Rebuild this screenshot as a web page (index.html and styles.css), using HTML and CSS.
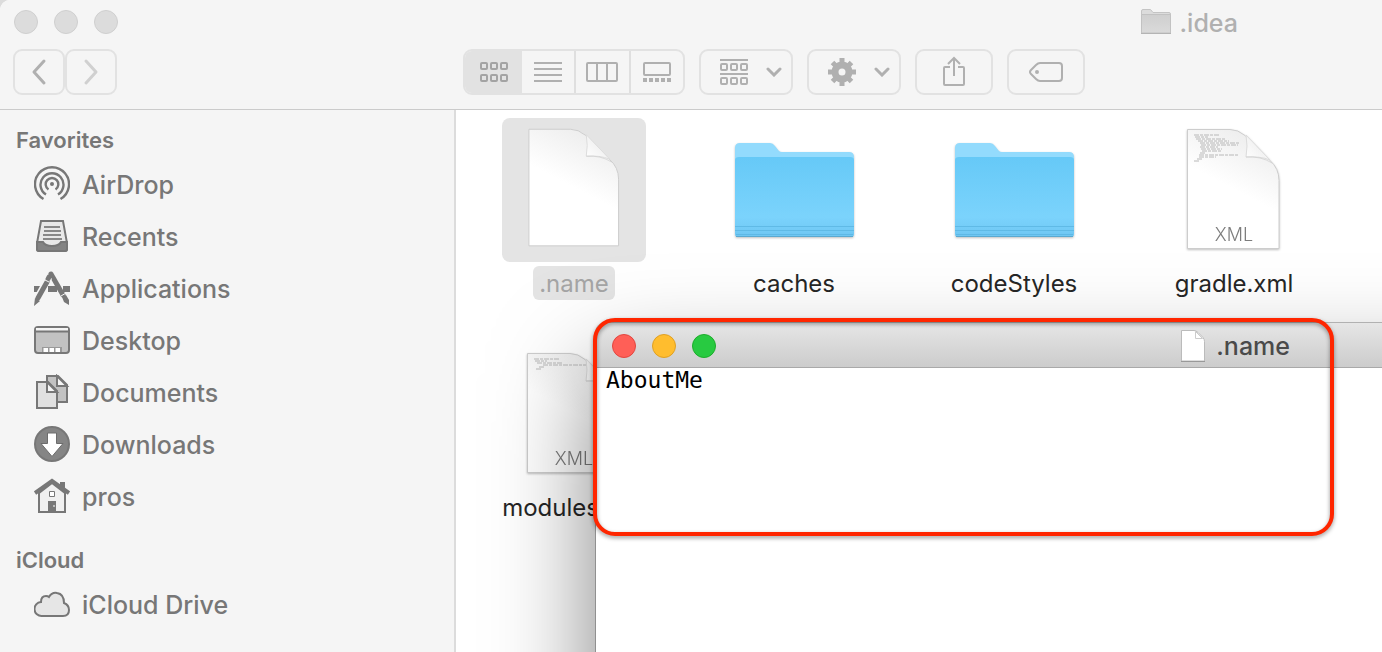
FILE: index.html
```html
<!DOCTYPE html>
<html lang="en">
<head>
  <meta charset="UTF-8">
  <title>.idea</title>
  <link rel="stylesheet" href="styles.css">
</head>
<body>
  <svg class="defs" width="0" height="0">
    <defs>
      <linearGradient id="folderFill" x1="0" y1="0" x2="0" y2="1">
        <stop offset="0" stop-color="#66c9f7"/>
        <stop offset="0.75" stop-color="#7bd3fc"/>
        <stop offset="1" stop-color="#6ec6f2"/>
      </linearGradient>
      <linearGradient id="paperFill" x1="0.7" y1="0" x2="0.5" y2="0.5">
        <stop offset="0" stop-color="#ececec"/>
        <stop offset="1" stop-color="#ffffff"/>
      </linearGradient>
      <linearGradient id="curlFill" x1="0" y1="1" x2="0.6" y2="0.4">
        <stop offset="0" stop-color="#ffffff"/>
        <stop offset="1" stop-color="#f0f0f0"/>
      </linearGradient>
      <linearGradient id="grayFolder" x1="0" y1="0" x2="0" y2="1">
        <stop offset="0" stop-color="#cfcfcf"/>
        <stop offset="1" stop-color="#dadada"/>
      </linearGradient>
    </defs>
    <symbol id="folder" viewBox="1 1 144 144">
      <path d="M14 116V31q0-5 5-5h30q3 0 5 3l4 5q1 1 3 1h67q5 0 5 5v76z" fill="#93dbfd"/>
      <path d="M14 117V43q0-3 4-3h111q4 0 4 3v74q0 3-3 3H17q-3 0-3-3z" fill="url(#folderFill)"/>
      <path d="M14 109.500h119M14 113.500h119M15 117.500h117" stroke="#58b2df" stroke-width="1" opacity="0.700"/>
      <path d="M15 119.500h117" stroke="#5aa9d0"/>
    </symbol>
    <symbol id="page" viewBox="1 0 144 144">
      <path d="M26.500 11.500H69q8 0 15 6l25 25q9 8 9 20v68h-91.500z" fill="url(#paperFill)" stroke="#cdcdcd"/>
      <path d="M85 17q2 11 0 22 14-1 24 3z" fill="url(#curlFill)" stroke="#dcdcdc"/>
      <path d="M85 39q15-1 26 6" fill="none" stroke="#cfcfcf" opacity="0.700"/>
    </symbol>
  </svg>

  <div class="finder">
    <header class="titlebar">
      <div class="title-row">
        <div class="lights inactive">
          <button class="light" aria-label="Close"></button>
          <button class="light" aria-label="Minimize"></button>
          <button class="light" aria-label="Zoom"></button>
        </div>
        <div class="finder-title">
          <svg width="30" height="26" viewBox="0 0 30 26">
            <path d="M.5 24V2Q.5.500 2 .5h7.500l2.500 3h16q1.500 0 1.500 1.500v19z" fill="#dcdcdc" stroke="#c4c4c4"/>
            <path d="M.5 5.500h29v18.500h-29z" fill="url(#grayFolder)" stroke="#c2c2c2"/>
            <path d="M0 24.500h30" stroke="#b4b4b4"/>
          </svg>
          <span>.idea</span>
        </div>
      </div>

      <div class="toolbar">
        <nav class="history">
          <button class="tool back" aria-label="Back">
            <svg width="20" height="28" viewBox="0 0 20 28"><path d="M15 3L5 14l10 11"/></svg>
          </button>
          <button class="tool forward" aria-label="Forward">
            <svg width="20" height="28" viewBox="0 0 20 28"><path d="M5 3l10 11L5 25"/></svg>
          </button>
        </nav>
        <div class="tools">
          <div class="views">
            <button class="view active" aria-label="Icons">
              <svg width="28" height="20" viewBox="0 0 28 20" stroke-width="2">
                <rect x="1" y="1" width="6" height="6" rx="1"/><rect x="11" y="1" width="6" height="6" rx="1"/><rect x="21" y="1" width="6" height="6" rx="1"/>
                <rect x="1" y="13" width="6" height="6" rx="1"/><rect x="11" y="13" width="6" height="6" rx="1"/><rect x="21" y="13" width="6" height="6" rx="1"/>
              </svg>
            </button>
            <button class="view" aria-label="List">
              <svg width="28" height="20" viewBox="0 0 28 20" stroke-width="2"><path d="M0 1h28M0 7h28M0 13h28M0 19h28"/></svg>
            </button>
            <button class="view" aria-label="Columns">
              <svg width="32" height="20" viewBox="0 0 32 20" stroke-width="2"><rect x="1" y="1" width="30" height="18" rx="1"/><path d="M11 1v18M21 1v18"/></svg>
            </button>
            <button class="view" aria-label="Gallery">
              <svg width="28" height="20" viewBox="0 0 28 20" stroke-width="2"><rect x="1" y="1" width="26" height="12" rx="1"/><path d="M0 18h28" stroke-width="4" stroke-dasharray="4 2"/></svg>
            </button>
          </div>
          <button class="tool menu" aria-label="Group by">
            <svg width="28" height="26" viewBox="0 0 28 26" stroke-width="2">
              <path d="M0 1h28M0 15h28"/>
              <rect x="1" y="5" width="6" height="6" rx="1"/><rect x="11" y="5" width="6" height="6" rx="1"/><rect x="21" y="5" width="6" height="6" rx="1"/>
              <rect x="1" y="19" width="6" height="6" rx="1"/><rect x="11" y="19" width="6" height="6" rx="1"/><rect x="21" y="19" width="6" height="6" rx="1"/>
            </svg>
            <svg width="16" height="10" viewBox="0 0 16 10"><path d="M2 2l6 6 6-6"/></svg>
          </button>
          <button class="tool menu" aria-label="Actions">
            <svg width="28" height="28" viewBox="0 0 28 28">
              <circle cx="14" cy="14" r="7" stroke-width="7"/>
              <path d="M14 0v5M14 23v5M0 14h5M23 14h5M4.500 4.500L8 8M20 20l3.500 3.500M4.500 23.500L8 20M20 8l3.500-3.500" stroke-width="5" stroke-linecap="butt"/>
            </svg>
            <svg width="16" height="10" viewBox="0 0 16 10"><path d="M2 2l6 6 6-6"/></svg>
          </button>
          <button class="tool" aria-label="Share">
            <svg width="24" height="32" viewBox="0 0 24 32" stroke-width="2"><path d="M8 11H3q-1 0-1 1v16q0 1 1 1h18q1 0 1-1V12q0-1-1-1h-5M12 20V2M6 8l6-6 6 6"/></svg>
          </button>
          <button class="tool" aria-label="Tags">
            <svg width="34" height="20" viewBox="0 0 34 20" stroke-width="2"><path d="M11 1h19q3 0 3 3v12q0 3-3 3H11q-2 0-4-2l-5-5q-2-2 0-4l5-5q2-2 4-2z"/><circle cx="8" cy="10" r="1"/></svg>
          </button>
        </div>
      </div>
    </header>

    <div class="body">
      <aside class="sidebar">
        <h2>Favorites</h2>
        <ul>
          <li><a href="#">
            <svg viewBox="0 0 36 36" fill="none" stroke="#777" stroke-width="2.400">
              <circle cx="18" cy="18" r="2" fill="#777" stroke="none"/>
              <path d="M14.500 23.500a6.300 6.300 0 1 1 7 0M12 28.500a11.500 11.500 0 1 1 12 0M9.500 33a17 17 0 1 1 17 0"/>
            </svg><span>AirDrop</span></a></li>
          <li><a href="#">
            <svg viewBox="0 0 36 36">
              <path d="M7 3h22l4 22v6q0 2-2 2H5q-2 0-2-2v-6z" fill="#e8e8e8" stroke="#777" stroke-width="2"/>
              <path d="M3 24h6q2 4 9 4t9-4h6v7q0 2-2 2H5q-2 0-2-2z" fill="#838383" stroke="#777" stroke-width="2"/>
              <path d="M10 9h16M10 13h17M9 17h18M9 21h19" stroke="#888" stroke-width="2"/>
            </svg><span>Recents</span></a></li>
          <li><a href="#">
            <svg viewBox="0 0 36 36" fill="none" stroke="#777">
              <path d="M0 19h8M14 19h9M29 19h7" stroke-width="6"/>
              <path d="M17 4l12 21" stroke-width="5" stroke-linecap="round"/>
              <path d="M15 7L4 27" stroke="#f5f5f5" stroke-width="7"/>
              <path d="M15 7l-1 2M13 12L4 28" stroke-width="5" stroke-linecap="round"/>
              <path d="M1 28l5 3-6 5zM28 27l4-2 3 5v5l-5-3z" fill="#777" stroke="none"/>
              <path d="M27 26l5-3M11 10l4 2" stroke="#f5f5f5" stroke-width="1"/>
            </svg><span>Applications</span></a></li>
          <li><a href="#">
            <svg viewBox="0 0 36 36">
              <rect x="1" y="5" width="34" height="26" rx="3" fill="#c2c2c2" stroke="#777" stroke-width="2"/>
              <path d="M2 6h32v3H2z" fill="#f5f5f5"/>
              <path d="M1 9.500h34" stroke="#777" stroke-width="2"/>
              <path d="M8 30v-5h20v5" fill="#999"/>
              <path d="M9.500 28h18" stroke="#fff" stroke-width="4" stroke-dasharray="4.500 1.500"/>
            </svg><span>Desktop</span></a></li>
          <li><a href="#">
            <svg viewBox="0 0 36 36" stroke="#777" stroke-width="2">
              <path d="M13 2h11l9 9v17H13z" fill="#c2c2c2"/><path d="M23 2v10h10z" fill="#f5f5f5"/>
              <path d="M3 8h11l9 9v17H3z" fill="#e0e0e0"/><path d="M13 8v10h10z" fill="#f5f5f5"/>
            </svg><span>Documents</span></a></li>
          <li><a href="#">
            <svg viewBox="0 0 36 36">
              <circle cx="18" cy="18" r="17" fill="#858585" stroke="#777" stroke-width="2"/>
              <path d="M13.500 7h9v10.500H29L18 30.500 7 17.500h6.500z" fill="#fff" stroke="#6c6c6c"/>
            </svg><span>Downloads</span></a></li>
          <li><a href="#">
            <svg viewBox="0 0 36 36">
              <path d="M26 4h5v10h-5z" fill="#777"/>
              <path d="M5 34V15L18 5l13 10v19z" fill="#f0f0f0" stroke="#777" stroke-width="2"/>
              <path d="M1 15L18 3l17 12" fill="none" stroke="#777" stroke-width="4"/>
              <path d="M14 23h8v11h-8z" fill="#777"/><path d="M20 27v2" stroke="#fff"/>
              <path d="M15.500 13.500h5v5h-5z" fill="#fff" stroke="#777"/>
            </svg><span>pros</span></a></li>
        </ul>
        <h2>iCloud</h2>
        <ul>
          <li><a href="#">
            <svg viewBox="0 0 36 36"><path d="M8 30a7 7 0 0 1-1-14q0-6 5-6 2 0 3 1 3-5 8-4 7 1 7 10 5 2 5 7 0 6-6 6z" fill="#e6e6e6" stroke="#777" stroke-width="2"/></svg><span>iCloud Drive</span></a></li>
        </ul>
      </aside>

      <main class="files">
        <figure class="file selected">
          <svg viewBox="-2 0 147 147"><use href="#page" width="144" height="144"/></svg>
          <figcaption>.name</figcaption>
        </figure>
        <figure class="file">
          <svg><use href="#folder"/></svg>
          <figcaption>caches</figcaption>
        </figure>
        <figure class="file">
          <svg><use href="#folder"/></svg>
          <figcaption>codeStyles</figcaption>
        </figure>
        <figure class="file">
          <svg viewBox="0 0 144 144">
            <use href="#page" width="144" height="144"/>
            <path class="code" d="M32 17h25M33 19h13M34 21h29M36 23h31M38 25h39M39 27h37M38 29h18M39 31h21M40 33h19M38 35h6M37 37h40M37 39h17M35 41h6M32 43h6"/>
            <text class="kind" x="72" y="123">XML</text>
          </svg>
          <figcaption>gradle.xml</figcaption>
        </figure>
        <figure class="file">
          <svg viewBox="0 0 144 144">
            <use href="#page" width="144" height="144"/>
            <path class="code" d="M32 17h25M33 19h12M35 21h25M41 23h43M37 25h5M34 27h5"/>
            <text class="kind" x="72" y="123">XML</text>
          </svg>
          <figcaption>modules.xml</figcaption>
        </figure>
      </main>
    </div>

    <section class="editor">
      <header class="editor-bar">
        <div class="lights">
          <button class="light red" aria-label="Close"></button>
          <button class="light yellow" aria-label="Minimize"></button>
          <button class="light green" aria-label="Zoom"></button>
        </div>
        <div class="editor-title">
          <svg width="24" height="32" viewBox="0 0 24 32">
            <path d="M.5.500H13q2 0 4 2l5 5q1.500 2 1.500 4v19.500H.5z" fill="#fff" stroke="#bbb"/>
            <path d="M14.500 1.500v7h7z" fill="#fff" stroke="#ccc"/>
            <path d="M0 31.500h24" stroke="#999"/>
          </svg>
          <span>.name</span>
        </div>
      </header>
      <textarea aria-label="File contents" spellcheck="false">AboutMe</textarea>
    </section>

    <div class="highlight"></div>
  </div>
</body>
</html>
```

FILE: styles.css
```css
* {
  box-sizing: border-box;
}

body {
  margin: 0;
  background: #dcdcdc;
  font-family: Inter, "Liberation Sans", sans-serif;
  color: #262626;
}

button {
  padding: 0;
  border: none;
  background: none;
}

svg {
  display: block;
  flex: none;
}

.defs {
  position: absolute;
}

.finder {
  position: relative;
  display: flex;
  flex-direction: column;
  height: 100vh;
  overflow: hidden;
  background: #fff;
  border-top-left-radius: 10px;
}

/* title bar and toolbar */

.titlebar {
  height: 110px;
  background: #f5f5f5;
  border-bottom: 1px solid #cbcbcb;
}

.title-row {
  display: flex;
  align-items: center;
  justify-content: space-between;
  height: 44px;
  padding: 0 144px 0 14px;
}

.lights {
  display: flex;
  gap: 16px;
}

.light {
  width: 24px;
  height: 24px;
  border: 1px solid #cfcfcf;
  border-radius: 50%;
  background: #dcdcdc;
}

.light.red {
  background: #ff5f57;
  border-color: #e2463f;
}

.light.yellow {
  background: #ffbd2e;
  border-color: #dfa023;
}

.light.green {
  background: #28ca41;
  border-color: #1dad2b;
}

.finder-title {
  display: flex;
  align-items: center;
  gap: 9px;
  font-size: 25px;
  font-weight: 500;
  color: #b0b0b0;
}

.finder-title span,
.sidebar a span {
  padding-top: 2px;
}

.toolbar {
  display: flex;
  padding-top: 5px;
}

.history {
  display: flex;
  width: 455px;
  padding-left: 13px;
}

.tools {
  display: flex;
  gap: 14px;
  padding-left: 8px;
}

.tool,
.views {
  display: flex;
  align-items: center;
  justify-content: center;
  width: 78px;
  height: 46px;
  border: 2px solid #e2e2e2;
  border-radius: 9px;
}

.tool svg,
.view svg {
  fill: none;
  stroke: #b0b0b0;
}

.history .tool {
  width: 52px;
}

.history svg {
  stroke-width: 3px;
  stroke-linecap: round;
  stroke-linejoin: round;
}

.tool.forward svg {
  stroke: #d0d0d0;
}

.tool.menu {
  width: 94px;
  gap: 18px;
  padding-left: 10px;
}

.menu svg:last-child {
  stroke-width: 3px;
  stroke-linecap: round;
}

.views {
  width: 222px;
  overflow: hidden;
}

.view {
  display: flex;
  flex: 1;
  align-items: center;
  justify-content: center;
  height: 100%;
  border-left: 2px solid #dfdfdf;
}

.view.active {
  flex: none;
  width: 57px;
  border: none;
  background: #e2e2e2;
}

.view.active svg {
  stroke: #a3a3a3;
}

.view.active + .view {
  border: none;
}

/* sidebar */

.body {
  display: flex;
  flex: 1;
  min-height: 0;
}

.sidebar {
  flex: none;
  width: 456px;
  padding-top: 12px;
  background: #f5f5f5;
  border-right: 2px solid #dcdcdc;
  color: #777;
}

.sidebar h2 {
  margin: 0;
  padding-left: 16px;
  font-size: 22px;
  font-weight: 600;
  line-height: 36px;
}

.sidebar ul {
  margin: 0 0 20px;
  padding: 0;
  list-style: none;
}

.sidebar a {
  display: flex;
  align-items: center;
  gap: 12px;
  height: 52px;
  padding-left: 34px;
  font-size: 25px;
  font-weight: 500;
  color: inherit;
  text-decoration: none;
}

.sidebar a svg {
  width: 36px;
  height: 36px;
}

/* icon grid */

.files {
  display: grid;
  flex: 1;
  grid-template-columns: repeat(4, 220px);
  grid-auto-rows: 224px;
  align-content: start;
  padding: 8px 0 0 8px;
}

.file {
  display: flex;
  flex-direction: column;
  align-items: center;
  gap: 4px;
  margin: 0;
}

.file svg {
  width: 144px;
  height: 144px;
  border-radius: 8px;
  filter: drop-shadow(0 1px 1px rgba(0, 0, 0, 0.25));
}

.file figcaption {
  padding: 1px 6px 0;
  border-radius: 6px;
  font-size: 24px;
  line-height: 33px;
}

.file.selected svg {
  background: #e4e4e4;
  filter: none;
}

.file.selected figcaption {
  background: #e4e4e4;
  color: #a5a5a5;
}

.code {
  fill: none;
  stroke: #b8b8b8;
  stroke-dasharray: 5 1 3 1;
}

.kind {
  fill: #7d7d7d;
  font-size: 18px;
  font-weight: 300;
  text-anchor: middle;
}

/* text window lying over the file list, runs off the right and bottom */

.editor {
  position: absolute;
  top: 323px;
  right: -120px;
  bottom: -120px;
  left: 596px;
  display: flex;
  flex-direction: column;
  background: #fff;
  border-top-left-radius: 10px;
  box-shadow: 0 0 0 1px rgba(0, 0, 0, 0.25), 0 50px 100px rgba(0, 0, 0, 0.5);
}

.editor-bar {
  display: flex;
  align-items: center;
  justify-content: space-between;
  height: 45px;
  padding: 2px 212px 0 16px;
  background: linear-gradient(#e6e6e6, #cccccc);
  border-bottom: 1px solid #a9a9a9;
  border-top-left-radius: 10px;
}

.editor-title {
  display: flex;
  align-items: center;
  gap: 11px;
  font-size: 25px;
  font-weight: 500;
  color: #4a4a4a;
}

.editor textarea {
  flex: 1;
  padding: 0 10px;
  border: none;
  outline: none;
  resize: none;
  background: #fff;
  color: #000;
  font-family: "DejaVu Sans Mono", monospace;
  font-size: 23px;
  line-height: 24px;
}

.highlight {
  position: absolute;
  top: 318px;
  right: 48px;
  left: 593px;
  height: 218px;
  border: 4px solid #ff2600;
  border-radius: 22px;
  filter: drop-shadow(0 2px 2px rgba(0, 0, 0, 0.4));
  pointer-events: none;
}
```
